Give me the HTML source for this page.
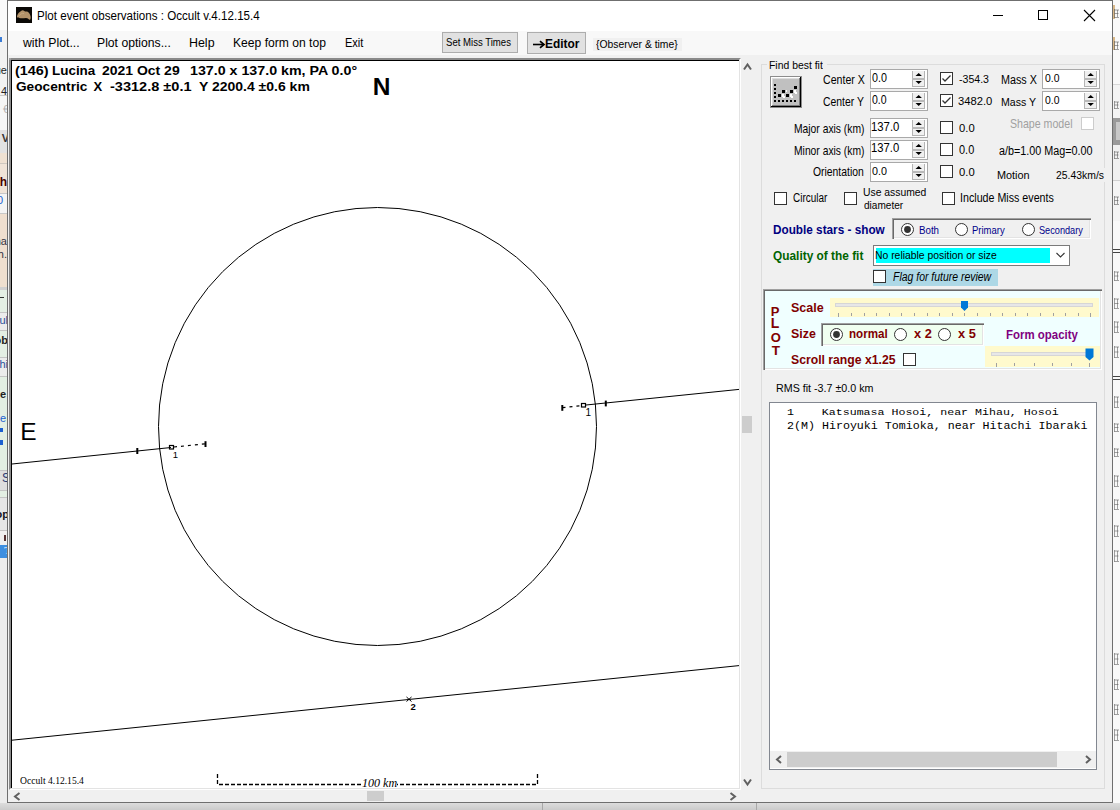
<!DOCTYPE html><html><head><meta charset="utf-8"><style>
html,body{margin:0;padding:0;}
body{width:1120px;height:810px;position:relative;overflow:hidden;background:#f0f0f0;}
body>div,body>svg{position:absolute;}
.t{white-space:pre;transform-origin:0 0;}
</style></head><body>
<div style="left:0px;top:0px;width:1120px;height:810px;background:#f0f0f0;"></div>
<div style="left:0px;top:0px;width:7px;height:30px;background:#fafafa;"></div>
<div style="left:0px;top:30px;width:7px;height:65px;background:#f2f2f2;"></div>
<div style="left:0px;top:95px;width:7px;height:35px;background:#f6f6f6;"></div>
<div style="left:0px;top:130px;width:7px;height:23px;background:#e2e2e2;"></div>
<div style="left:0px;top:153px;width:7px;height:10px;background:#efe1d2;"></div>
<div style="left:0px;top:163px;width:7px;height:1px;background:#cfc8c0;"></div>
<div style="left:0px;top:164px;width:7px;height:29px;background:#f0e4d8;"></div>
<div style="left:0px;top:193px;width:7px;height:20px;background:#f4f4f4;"></div>
<div style="left:0px;top:213px;width:7px;height:74px;background:#efdfcf;"></div>
<div style="left:0px;top:287px;width:7px;height:3px;background:#d0d0d0;"></div>
<div style="left:0px;top:290px;width:7px;height:22px;background:#e4efe4;"></div>
<div style="left:0px;top:312px;width:7px;height:18px;background:#ececec;"></div>
<div style="left:0px;top:330px;width:7px;height:27px;background:#e4efe4;"></div>
<div style="left:0px;top:357px;width:7px;height:19px;background:#ececec;"></div>
<div style="left:0px;top:376px;width:7px;height:94px;background:#e3efe3;"></div>
<div style="left:0px;top:470px;width:7px;height:20px;background:#dedede;"></div>
<div style="left:0px;top:490px;width:7px;height:7px;background:#e3efe3;"></div>
<div style="left:0px;top:497px;width:7px;height:33px;background:#e6e6e6;"></div>
<div style="left:0px;top:530px;width:7px;height:15px;background:#f0f0f0;"></div>
<div style="left:0px;top:545px;width:7px;height:13px;background:#3d8ee0;"></div>
<div style="left:0px;top:558px;width:7px;height:252px;background:#ececec;"></div>
<div style="left:0px;top:37px;width:2px;height:5px;background:#3a7bd5;"></div>
<div style="left:-193px;width:200px;top:65px;text-align:right;white-space:pre;font:normal 400 11px/11px 'Liberation Sans', sans-serif;color:#222;">ue</div>
<div style="left:0px;top:95px;width:7px;height:1px;background:#c8c8c8;"></div>
<div style="left:-193px;width:200px;top:86px;text-align:right;white-space:pre;font:normal 400 11px/11px 'Liberation Sans', sans-serif;color:#222;">4</div>
<div style="left:-191px;width:200px;top:104px;text-align:right;white-space:pre;font:normal 400 11px/11px 'Liberation Sans', sans-serif;color:#b0b0b0;">S €</div>
<div style="left:-191px;width:200px;top:133px;text-align:right;white-space:pre;font:normal 700 11px/11px 'Liberation Sans', sans-serif;color:#333;">V</div>
<div style="left:-193px;width:200px;top:176px;text-align:right;white-space:pre;font:normal 700 12px/12px 'Liberation Sans', sans-serif;color:#400;">h</div>
<div style="left:0px;top:193px;width:7px;height:1px;background:#c8c8c8;"></div>
<div style="left:0px;top:213px;width:7px;height:1px;background:#c8c8c8;"></div>
<div style="left:-197px;width:200px;top:195px;text-align:right;white-space:pre;font:normal 400 11px/11px 'Liberation Sans', sans-serif;color:#1c5fd0;">0</div>
<div style="left:-193px;width:200px;top:236px;text-align:right;white-space:pre;font:normal 400 11px/11px 'Liberation Sans', sans-serif;color:#334;">na</div>
<div style="left:-193px;width:200px;top:249px;text-align:right;white-space:pre;font:normal 400 11px/11px 'Liberation Sans', sans-serif;color:#334;">h.</div>
<div style="left:0px;top:297px;width:4px;height:1px;background:#333;"></div>
<div style="left:-192px;width:200px;top:315px;text-align:right;white-space:pre;font:normal 400 11px/11px 'Liberation Sans', sans-serif;color:#2a4f9a;">ul</div>
<div style="left:-192px;width:200px;top:335px;text-align:right;white-space:pre;font:normal 700 11px/11px 'Liberation Sans', sans-serif;color:#222;">ob</div>
<div style="left:-192px;width:200px;top:359px;text-align:right;white-space:pre;font:normal 400 11px/11px 'Liberation Sans', sans-serif;color:#2a4f9a;">hi</div>
<div style="left:-194px;width:200px;top:389px;text-align:right;white-space:pre;font:normal 700 11px/11px 'Liberation Sans', sans-serif;color:#222;">e</div>
<div style="left:-194px;width:200px;top:413px;text-align:right;white-space:pre;font:normal 400 11px/11px 'Liberation Sans', sans-serif;color:#1c5fd0;">e</div>
<div style="left:0px;top:428px;width:3px;height:4px;background:#1c5fd0;"></div>
<div style="left:-190px;width:200px;top:472px;text-align:right;white-space:pre;font:normal 400 12px/12px 'Liberation Sans', sans-serif;color:#2a3a70;">S</div>
<div style="left:-191px;width:200px;top:509px;text-align:right;white-space:pre;font:normal 700 11px/11px 'Liberation Sans', sans-serif;color:#112;">op</div>
<div style="left:4px;top:535px;width:2px;height:6px;background:#533;"></div>
<div style="left:-189px;width:200px;top:545px;text-align:right;white-space:pre;font:normal 400 11px/11px 'Liberation Serif', serif;color:#fff;">T</div>
<div style="left:0px;top:312px;width:7px;height:1px;background:#c4c4c4;"></div>
<div style="left:0px;top:330px;width:7px;height:1px;background:#c4c4c4;"></div>
<div style="left:0px;top:357px;width:7px;height:1px;background:#c4c4c4;"></div>
<div style="left:0px;top:376px;width:7px;height:1px;background:#c4c4c4;"></div>
<div style="left:0px;top:470px;width:7px;height:1px;background:#c4c4c4;"></div>
<div style="left:0px;top:490px;width:7px;height:1px;background:#c4c4c4;"></div>
<div style="left:0px;top:497px;width:7px;height:1px;background:#c4c4c4;"></div>
<div style="left:0px;top:530px;width:7px;height:1px;background:#c4c4c4;"></div>
<div style="left:0px;top:440px;width:3px;height:5px;background:#1c5fd0;"></div>
<div style="left:1113px;top:0px;width:7px;height:810px;background:#f9f9f9;"></div>
<div style="left:1113px;top:5px;width:2px;height:14px;background:#d9b98a;"></div>
<div style="left:1113px;top:37px;width:2px;height:13px;background:#d9b98a;"></div>
<div style="left:1113px;top:84px;width:7px;height:1px;background:#d8d8d8;"></div>
<div style="left:1113px;top:85px;width:7px;height:33px;background:#f4f4f4;"></div>
<div style="left:1113px;top:118px;width:7px;height:27px;background:#9a9a9a;"></div>
<div style="left:1116px;top:122px;width:4px;height:18px;background:#c8c8c8;"></div>
<div style="left:1113px;top:145px;width:7px;height:35px;background:#f0f0f0;"></div>
<div style="left:1113px;top:180px;width:7px;height:1px;background:#d0d0d0;"></div>
<div style="left:1113px;top:181px;width:7px;height:40px;background:#f4f4f4;"></div>
<div style="left:1113px;top:249px;width:7px;height:1px;background:#444;"></div>
<div style="left:1113px;top:252px;width:7px;height:1px;background:#444;"></div>
<div style="left:1113px;top:376px;width:7px;height:1px;background:#444;"></div>
<div style="left:1113px;top:379px;width:7px;height:1px;background:#444;"></div>
<svg style="left:1113px;top:8px" width="7" height="11"><path d="M1.5 1 V10 M1.5 2 H6 M1.5 5.5 H5.5 M4.5 2 V9 M1.5 9.5 H6" stroke="#555" stroke-width="1" fill="none" opacity="0.55"/></svg>
<svg style="left:1113px;top:40px" width="7" height="11"><path d="M1.5 1 V10 M1.5 2 H6 M1.5 5.5 H5.5 M4.5 2 V9 M1.5 9.5 H6" stroke="#555" stroke-width="1" fill="none" opacity="0.55"/></svg>
<svg style="left:1113px;top:100px" width="7" height="10"><path d="M1.5 1 V9 M1.5 2 H6 M1.5 5.0 H5.5 M4.5 2 V8 M1.5 8.5 H6" stroke="#555" stroke-width="1" fill="none" opacity="0.55"/></svg>
<svg style="left:1113px;top:150px" width="7" height="10"><path d="M1.5 1 V9 M1.5 2 H6 M1.5 5.0 H5.5 M4.5 2 V8 M1.5 8.5 H6" stroke="#555" stroke-width="1" fill="none" opacity="0.55"/></svg>
<svg style="left:1113px;top:195px" width="7" height="11"><path d="M1.5 1 V10 M1.5 2 H6 M1.5 5.5 H5.5 M4.5 2 V9 M1.5 9.5 H6" stroke="#555" stroke-width="1" fill="none" opacity="0.55"/></svg>
<svg style="left:1113px;top:270px" width="7" height="12"><path d="M1.5 1 V11 M1.5 2 H6 M1.5 6.0 H5.5 M4.5 2 V10 M1.5 10.5 H6" stroke="#555" stroke-width="1" fill="none" opacity="0.55"/></svg>
<svg style="left:1113px;top:297px" width="7" height="13"><path d="M1.5 1 V12 M1.5 2 H6 M1.5 6.5 H5.5 M4.5 2 V11 M1.5 11.5 H6" stroke="#555" stroke-width="1" fill="none" opacity="0.55"/></svg>
<svg style="left:1113px;top:320px" width="7" height="14"><path d="M1.5 1 V13 M1.5 2 H6 M1.5 7.0 H5.5 M4.5 2 V12 M1.5 12.5 H6" stroke="#555" stroke-width="1" fill="none" opacity="0.55"/></svg>
<svg style="left:1113px;top:345px" width="7" height="14"><path d="M1.5 1 V13 M1.5 2 H6 M1.5 7.0 H5.5 M4.5 2 V12 M1.5 12.5 H6" stroke="#555" stroke-width="1" fill="none" opacity="0.55"/></svg>
<svg style="left:1113px;top:395px" width="7" height="14"><path d="M1.5 1 V13 M1.5 2 H6 M1.5 7.0 H5.5 M4.5 2 V12 M1.5 12.5 H6" stroke="#555" stroke-width="1" fill="none" opacity="0.55"/></svg>
<svg style="left:1113px;top:422px" width="7" height="11"><path d="M1.5 1 V10 M1.5 2 H6 M1.5 5.5 H5.5 M4.5 2 V9 M1.5 9.5 H6" stroke="#555" stroke-width="1" fill="none" opacity="0.55"/></svg>
<svg style="left:1113px;top:447px" width="7" height="11"><path d="M1.5 1 V10 M1.5 2 H6 M1.5 5.5 H5.5 M4.5 2 V9 M1.5 9.5 H6" stroke="#555" stroke-width="1" fill="none" opacity="0.55"/></svg>
<svg style="left:1113px;top:474px" width="7" height="14"><path d="M1.5 1 V13 M1.5 2 H6 M1.5 7.0 H5.5 M4.5 2 V12 M1.5 12.5 H6" stroke="#555" stroke-width="1" fill="none" opacity="0.55"/></svg>
<svg style="left:1113px;top:498px" width="7" height="13"><path d="M1.5 1 V12 M1.5 2 H6 M1.5 6.5 H5.5 M4.5 2 V11 M1.5 11.5 H6" stroke="#555" stroke-width="1" fill="none" opacity="0.55"/></svg>
<svg style="left:1113px;top:524px" width="7" height="14"><path d="M1.5 1 V13 M1.5 2 H6 M1.5 7.0 H5.5 M4.5 2 V12 M1.5 12.5 H6" stroke="#555" stroke-width="1" fill="none" opacity="0.55"/></svg>
<svg style="left:1113px;top:549px" width="7" height="14"><path d="M1.5 1 V13 M1.5 2 H6 M1.5 7.0 H5.5 M4.5 2 V12 M1.5 12.5 H6" stroke="#555" stroke-width="1" fill="none" opacity="0.55"/></svg>
<svg style="left:1113px;top:652px" width="7" height="14"><path d="M1.5 1 V13 M1.5 2 H6 M1.5 7.0 H5.5 M4.5 2 V12 M1.5 12.5 H6" stroke="#555" stroke-width="1" fill="none" opacity="0.55"/></svg>
<svg style="left:1113px;top:678px" width="7" height="13"><path d="M1.5 1 V12 M1.5 2 H6 M1.5 6.5 H5.5 M4.5 2 V11 M1.5 11.5 H6" stroke="#555" stroke-width="1" fill="none" opacity="0.55"/></svg>
<svg style="left:1113px;top:703px" width="7" height="13"><path d="M1.5 1 V12 M1.5 2 H6 M1.5 6.5 H5.5 M4.5 2 V11 M1.5 11.5 H6" stroke="#555" stroke-width="1" fill="none" opacity="0.55"/></svg>
<svg style="left:1113px;top:728px" width="7" height="14"><path d="M1.5 1 V13 M1.5 2 H6 M1.5 7.0 H5.5 M4.5 2 V12 M1.5 12.5 H6" stroke="#555" stroke-width="1" fill="none" opacity="0.55"/></svg>
<div style="left:0px;top:803px;width:1120px;height:7px;background:linear-gradient(#dcdcdc,#cbcbcb);"></div>
<div style="left:542px;top:803px;width:1px;height:7px;background:#a8a8a8;"></div>
<div style="left:756px;top:803px;width:1px;height:7px;background:#a8a8a8;"></div>
<div style="left:7px;top:0px;width:1106px;height:803px;background:#f0f0f0;box-sizing:border-box;border:1px solid #6f6f6f;"></div>
<div style="left:8px;top:1px;width:1104px;height:30px;background:#ffffff;"></div>
<svg style="left:16px;top:7px" width="16" height="16"><rect width="16" height="16" fill="#0b0906"/><path d="M1 10 C1 7 3.5 4.5 6.5 3.2 C8 3.5 9 4.8 10 4.6 C12 4.2 13.5 6 14.5 9 C15 11 14.5 13 13.5 12.8 C12.5 12 11.5 11 10 11 C8 11 6 11.5 4.5 11.2 C3 11 1.5 11 1 10 Z" fill="#b3936a"/><path d="M3 9 C4 7 6 6 8 6.5" stroke="#d2b58c" stroke-width="1" fill="none" opacity="0.6"/></svg>
<div id="title" class="t" style="left:36.82px;top:9.50px;font:normal 400 12.5px/12.5px 'Liberation Sans', sans-serif;color:#000;transform:scaleX(0.9272);">Plot event observations : Occult v.4.12.15.4</div>
<div style="left:993px;top:15px;width:10px;height:1px;background:#000;"></div>
<div style="left:1038px;top:10px;width:10px;height:10px;box-sizing:border-box;border:1px solid #000;"></div>
<svg style="left:1083px;top:9px" width="13" height="13"><path d="M1 1 L12 12 M12 1 L1 12" stroke="#000" stroke-width="1.1"/></svg>
<div style="left:8px;top:31px;width:1104px;height:24px;background:#f8f8f8;"></div>
<div id="m1" class="t" style="left:23.22px;top:35.75px;font:normal 400 13.0px/13.0px 'Liberation Sans', sans-serif;color:#000;transform:scaleX(0.9441);">with Plot...</div>
<div id="m2" class="t" style="left:97.32px;top:35.75px;font:normal 400 13.0px/13.0px 'Liberation Sans', sans-serif;color:#000;transform:scaleX(0.9378);">Plot options...</div>
<div id="m3" class="t" style="left:189.32px;top:35.75px;font:normal 400 13.0px/13.0px 'Liberation Sans', sans-serif;color:#000;transform:scaleX(0.9552);">Help</div>
<div id="m4" class="t" style="left:233.04px;top:35.75px;font:normal 400 13.0px/13.0px 'Liberation Sans', sans-serif;color:#000;transform:scaleX(0.9314);">Keep form on top</div>
<div id="m5" class="t" style="left:344.60px;top:35.75px;font:normal 400 13.0px/13.0px 'Liberation Sans', sans-serif;color:#000;transform:scaleX(0.8477);">Exit</div>
<div style="left:442px;top:32px;width:76px;height:21px;background:#e1e1e1;box-sizing:border-box;border:1px solid #adadad;"></div>
<div id="b1" class="t" style="left:446.10px;top:37.90px;font:normal 400 10.0px/10.0px 'Liberation Sans', sans-serif;color:#000;transform:scaleX(0.9576);">Set Miss Times</div>
<div style="left:527px;top:32px;width:59px;height:22px;background:#e1e1e1;box-sizing:border-box;border:1px solid #adadad;"></div>
<div id="b2" class="t" style="left:545.10px;top:36.70px;font:normal 700 13.0px/13.0px 'Liberation Sans', sans-serif;color:#000;transform:scaleX(0.9156);">Editor</div>
<svg style="left:532px;top:39px" width="14" height="11"><path d="M1 5.5 H11.5" stroke="#000" stroke-width="1.6"/><path d="M8 2.2 L12 5.5 L8 8.8" fill="none" stroke="#000" stroke-width="1.7"/></svg>
<div style="left:593px;top:38px;width:89px;height:13px;background:#f0f0f0;"></div>
<div id="b3" class="t" style="left:596.22px;top:39.00px;font:normal 400 11.5px/11.5px 'Liberation Sans', sans-serif;color:#000;transform:scaleX(0.9001);">{Observer &amp; time}</div>
<div style="left:8px;top:55px;width:734px;height:4px;background:#f0f0f0;"></div>
<div style="left:9px;top:58px;width:732px;height:732px;background:#fff;box-sizing:border-box;border-top:2px solid #8a8a8a;border-left:2px solid #8a8a8a;border-right:2px solid #fff;border-bottom:2px solid #fff;"></div>
<div style="left:9px;top:58px;width:2px;height:2px;background:#a0a0a0;"></div>
<div style="left:11px;top:60px;width:728px;height:1px;background:#000;"></div>
<div style="left:11px;top:60px;width:1px;height:728px;background:#000;"></div>
<div style="left:739px;top:60px;width:1px;height:729px;background:#e3e3e3;"></div>
<div style="left:11px;top:788px;width:729px;height:1px;background:#e3e3e3;"></div>
<svg style="left:0;top:0" width="1120" height="810">
<g fill="none" stroke="#000">
<circle cx="377.5" cy="426.5" r="219" stroke-width="1.0"/>
<line x1="12" y1="464" x2="171" y2="447.5" stroke-width="1.0"/>
<line x1="12" y1="740.2" x2="739" y2="665.6" stroke-width="1.0"/>
<line x1="586" y1="405" x2="739" y2="389.4" stroke-width="1.0"/>
<line x1="174" y1="447" x2="205" y2="443.8" stroke-width="1.2" stroke-dasharray="3 4"/>
<line x1="562.5" y1="407.6" x2="581" y2="405.7" stroke-width="1.2" stroke-dasharray="3 4"/>
<rect x="169.5" y="445.5" width="4" height="3.5" stroke-width="1.2"/>
<rect x="581.5" y="403.5" width="4" height="3.5" stroke-width="1.2"/>
<line x1="137.3" y1="448" x2="137.3" y2="454" stroke-width="2"/>
<line x1="205.5" y1="441.2" x2="205.5" y2="447" stroke-width="2"/>
<line x1="605.8" y1="400.6" x2="605.8" y2="406.4" stroke-width="2"/>
<line x1="562.3" y1="405" x2="562.3" y2="410.8" stroke-width="2"/>
<path d="M406.5 697 L411.5 701.5 M411.5 697 L406.5 701.5" stroke-width="1"/>
<path d="M217.5 774 V784.5 H377.5 M537.5 774 V784.5 H377.5" stroke-width="1.3" stroke-dasharray="4 2"/>
</g></svg>
<div id="h1a" class="t" style="left:14.73px;top:65.30px;font:normal 700 12.5px/12.5px 'Liberation Sans', sans-serif;color:#000;transform:scaleX(1.1536);">(146)</div>
<div id="h1b" class="t" style="left:51.73px;top:65.30px;font:normal 700 12.5px/12.5px 'Liberation Sans', sans-serif;color:#000;transform:scaleX(1.0745);">Lucina</div>
<div id="h1c" class="t" style="left:102.37px;top:65.30px;font:normal 700 12.5px/12.5px 'Liberation Sans', sans-serif;color:#000;transform:scaleX(1.1175);">2021 Oct 29</div>
<div id="h1d" class="t" style="left:189.52px;top:65.30px;font:normal 700 12.5px/12.5px 'Liberation Sans', sans-serif;color:#000;transform:scaleX(1.1384);">137.0 x 137.0 km, PA 0.0°</div>
<div id="h2a" class="t" style="left:15.58px;top:80.00px;font:normal 700 13.0px/13.0px 'Liberation Sans', sans-serif;color:#000;transform:scaleX(1.0507);">Geocentric</div>
<div id="h2b" class="t" style="left:93.47px;top:80.00px;font:normal 700 13.0px/13.0px 'Liberation Sans', sans-serif;color:#000;">X</div>
<div id="h2c" class="t" style="left:110.19px;top:80.00px;font:normal 700 13.0px/13.0px 'Liberation Sans', sans-serif;color:#000;transform:scaleX(1.1181);">-3312.8 ±0.1</div>
<div id="h2d" class="t" style="left:199.05px;top:80.00px;font:normal 700 13.0px/13.0px 'Liberation Sans', sans-serif;color:#000;transform:scaleX(1.0755);">Y 2200.4 ±0.6 km</div>
<div id="N" class="t" style="left:372.64px;top:75.30px;font:normal 700 24.5px/24.5px 'Liberation Sans', sans-serif;color:#000;">N</div>
<div id="E" class="t" style="left:20.20px;top:420.30px;font:normal 400 24.5px/24.5px 'Liberation Sans', sans-serif;color:#000;">E</div>
<div id="l1a" class="t" style="left:172.66px;top:450.20px;font:normal 400 9.5px/9.5px 'Liberation Sans', sans-serif;color:#000;">1</div>
<div id="l1b" class="t" style="left:585.38px;top:407.75px;font:normal 400 10.0px/10.0px 'Liberation Sans', sans-serif;color:#000;">1</div>
<div id="l2" class="t" style="left:410.44px;top:702.30px;font:normal 700 9.5px/9.5px 'Liberation Sans', sans-serif;color:#000;">2</div>
<div style="left:361px;top:777px;width:36px;height:11px;background:#fff;"></div>
<div id="occ" class="t" style="left:19.56px;top:775.80px;font:normal 400 10.0px/10.0px 'Liberation Serif', serif;color:#000;transform:scaleX(0.9585);">Occult 4.12.15.4</div>
<div id="km" class="t" style="left:362.10px;top:778.30px;font:italic 400 11.5px/11.5px 'Liberation Serif', serif;color:#000;transform:scaleX(1.0472);">100 km</div>
<div style="left:367px;top:791px;width:17px;height:10px;background:#cdcdcd;"></div>
<div style="left:742px;top:416px;width:10px;height:17px;background:#cdcdcd;"></div>
<svg style="left:0;top:0" width="1120" height="810"><g fill="none" stroke="#606060" stroke-width="2">
<path d="M19.5 793 L15 796.5 L19.5 800"/>
<path d="M730.5 793 L735 796.5 L730.5 800"/>
<path d="M744 69.5 L747.5 64.5 L751 69.5"/>
<path d="M744 779.5 L747.5 784.5 L751 779.5"/>
</g></svg>
<div style="left:761px;top:64px;width:344px;height:725px;box-sizing:border-box;border:1px solid #dcdcdc;"></div>
<div style="left:767px;top:58px;width:60px;height:10px;background:#f0f0f0;"></div>
<div id="fbf" class="t" style="left:769.04px;top:59.70px;font:normal 400 11.0px/11.0px 'Liberation Sans', sans-serif;color:#000;transform:scaleX(0.9464);">Find best fit</div>
<svg style="left:770px;top:76px" width="32" height="32" shape-rendering="crispEdges">
<rect x="0" y="0" width="32" height="32" fill="#8c8c8c"/>
<rect x="1" y="1" width="30" height="30" fill="#000"/>
<rect x="1" y="1" width="29" height="29" fill="#fff"/>
<rect x="2" y="2" width="28" height="28" fill="#7a7a7a"/>
<rect x="2" y="2" width="27" height="27" fill="#dcdcdc"/>
<rect x="3" y="3" width="26" height="26" fill="#c0c0c0"/>
<g fill="#000">
<rect x="4" y="8" width="2" height="2"/><rect x="4" y="12" width="2" height="2"/><rect x="4" y="16" width="2" height="2"/><rect x="4" y="20" width="2" height="2"/><rect x="4" y="24" width="2" height="2"/>
<rect x="8" y="24" width="2" height="2"/><rect x="12" y="24" width="2" height="2"/><rect x="16" y="24" width="2" height="2"/><rect x="20" y="24" width="2" height="2"/><rect x="24" y="24" width="2" height="2"/>
<rect x="8" y="18" width="3" height="3"/><rect x="12" y="14" width="3" height="3"/><rect x="16" y="18" width="3" height="3"/><rect x="20" y="14" width="3" height="3"/><rect x="24" y="10" width="3" height="3"/>
</g>
<g fill="#fff"><rect x="12" y="18" width="2" height="3"/><rect x="13" y="20" width="2" height="2"/><rect x="20" y="18" width="2" height="3"/><rect x="21" y="20" width="2" height="2"/><rect x="24" y="14" width="2" height="3"/><rect x="25" y="16" width="2" height="2"/><rect x="16" y="14" width="1" height="2"/></g>
</svg>
<div id="cx" class="t" style="left:822.50px;top:73.90px;font:normal 400 12.0px/12.0px 'Liberation Sans', sans-serif;color:#000;transform:scaleX(0.8833);">Center X</div>
<div id="cy" class="t" style="left:822.50px;top:96.10px;font:normal 400 12.5px/12.5px 'Liberation Sans', sans-serif;color:#000;transform:scaleX(0.8335);">Center Y</div>
<div style="left:870px;top:69px;width:56px;height:18px;background:#fff;border:1px solid #a9a9a9;"></div>
<div style="left:912px;top:71px;width:13px;height:16px;background:#f0f0f0;border-left:1px solid #b4b4b4;border-right:1px solid #b4b4b4;border-bottom:1px solid #b4b4b4;box-sizing:border-box;"></div>
<div style="left:912px;top:78px;width:13px;height:2px;background:#b9b9b9;"></div>
<svg style="left:912px;top:69px" width="14" height="20"><path d="M3.5 7 L6.7 4 L9.9 7 Z" fill="#000"/><path d="M3.5 12 L6.7 15 L9.9 12 Z" fill="#000"/></svg>
<div style="left:870px;top:91px;width:56px;height:18px;background:#fff;border:1px solid #a9a9a9;"></div>
<div style="left:912px;top:93px;width:13px;height:16px;background:#f0f0f0;border-left:1px solid #b4b4b4;border-right:1px solid #b4b4b4;border-bottom:1px solid #b4b4b4;box-sizing:border-box;"></div>
<div style="left:912px;top:100px;width:13px;height:2px;background:#b9b9b9;"></div>
<svg style="left:912px;top:91px" width="14" height="20"><path d="M3.5 7 L6.7 4 L9.9 7 Z" fill="#000"/><path d="M3.5 12 L6.7 15 L9.9 12 Z" fill="#000"/></svg>
<div id="n1" class="t" style="left:872.22px;top:71.10px;font:normal 400 13.0px/13.0px 'Liberation Sans', sans-serif;color:#000;transform:scaleX(0.8245);">0.0</div>
<div id="n2" class="t" style="left:872.22px;top:92.50px;font:normal 400 13.5px/13.5px 'Liberation Sans', sans-serif;color:#000;transform:scaleX(0.7787);">0.0</div>
<div style="left:940px;top:72px;width:11px;height:11px;background:#fff;border:1px solid #333;"></div>
<svg style="left:940px;top:72px" width="13" height="13"><path d="M2.5 6.5 L5 9 L10.5 3.5" fill="none" stroke="#333" stroke-width="1.3"/></svg>
<div style="left:940px;top:94px;width:11px;height:11px;background:#fff;border:1px solid #333;"></div>
<svg style="left:940px;top:94px" width="13" height="13"><path d="M2.5 6.5 L5 9 L10.5 3.5" fill="none" stroke="#333" stroke-width="1.3"/></svg>
<div id="v1" class="t" style="left:959.00px;top:73.80px;font:normal 400 11.5px/11.5px 'Liberation Sans', sans-serif;color:#000;transform:scaleX(0.9188);">-354.3</div>
<div id="v2" class="t" style="left:958.04px;top:95.50px;font:normal 400 11.5px/11.5px 'Liberation Sans', sans-serif;color:#000;transform:scaleX(0.9768);">3482.0</div>
<div id="mx" class="t" style="left:1000.60px;top:74.10px;font:normal 400 12.0px/12.0px 'Liberation Sans', sans-serif;color:#000;transform:scaleX(0.8976);">Mass X</div>
<div id="my" class="t" style="left:1000.60px;top:97.30px;font:normal 400 11.5px/11.5px 'Liberation Sans', sans-serif;color:#000;transform:scaleX(0.9191);">Mass Y</div>
<div style="left:1042px;top:69px;width:56px;height:18px;background:#fff;border:1px solid #a9a9a9;"></div>
<div style="left:1084px;top:71px;width:13px;height:16px;background:#f0f0f0;border-left:1px solid #b4b4b4;border-right:1px solid #b4b4b4;border-bottom:1px solid #b4b4b4;box-sizing:border-box;"></div>
<div style="left:1084px;top:78px;width:13px;height:2px;background:#b9b9b9;"></div>
<svg style="left:1084px;top:69px" width="14" height="20"><path d="M3.5 7 L6.7 4 L9.9 7 Z" fill="#000"/><path d="M3.5 12 L6.7 15 L9.9 12 Z" fill="#000"/></svg>
<div style="left:1042px;top:91px;width:56px;height:18px;background:#fff;border:1px solid #a9a9a9;"></div>
<div style="left:1084px;top:93px;width:13px;height:16px;background:#f0f0f0;border-left:1px solid #b4b4b4;border-right:1px solid #b4b4b4;border-bottom:1px solid #b4b4b4;box-sizing:border-box;"></div>
<div style="left:1084px;top:100px;width:13px;height:2px;background:#b9b9b9;"></div>
<svg style="left:1084px;top:91px" width="14" height="20"><path d="M3.5 7 L6.7 4 L9.9 7 Z" fill="#000"/><path d="M3.5 12 L6.7 15 L9.9 12 Z" fill="#000"/></svg>
<div id="n3" class="t" style="left:1044.50px;top:72.70px;font:normal 400 11.0px/11.0px 'Liberation Sans', sans-serif;color:#000;transform:scaleX(0.9467);">0.0</div>
<div id="n4" class="t" style="left:1044.50px;top:94.70px;font:normal 400 11.0px/11.0px 'Liberation Sans', sans-serif;color:#000;transform:scaleX(0.9467);">0.0</div>
<div id="maj" class="t" style="left:793.60px;top:121.90px;font:normal 400 13.0px/13.0px 'Liberation Sans', sans-serif;color:#000;transform:scaleX(0.7932);">Major axis (km)</div>
<div id="min" class="t" style="left:793.60px;top:143.60px;font:normal 400 13.0px/13.0px 'Liberation Sans', sans-serif;color:#000;transform:scaleX(0.7932);">Minor axis (km)</div>
<div id="ori" class="t" style="left:813.00px;top:165.50px;font:normal 400 12.5px/12.5px 'Liberation Sans', sans-serif;color:#000;transform:scaleX(0.8297);">Orientation</div>
<div style="left:870px;top:118px;width:56px;height:18px;background:#fff;border:1px solid #a9a9a9;"></div>
<div style="left:912px;top:120px;width:13px;height:16px;background:#f0f0f0;border-left:1px solid #b4b4b4;border-right:1px solid #b4b4b4;border-bottom:1px solid #b4b4b4;box-sizing:border-box;"></div>
<div style="left:912px;top:127px;width:13px;height:2px;background:#b9b9b9;"></div>
<svg style="left:912px;top:118px" width="14" height="20"><path d="M3.5 7 L6.7 4 L9.9 7 Z" fill="#000"/><path d="M3.5 12 L6.7 15 L9.9 12 Z" fill="#000"/></svg>
<div style="left:870px;top:140px;width:56px;height:18px;background:#fff;border:1px solid #a9a9a9;"></div>
<div style="left:912px;top:142px;width:13px;height:16px;background:#f0f0f0;border-left:1px solid #b4b4b4;border-right:1px solid #b4b4b4;border-bottom:1px solid #b4b4b4;box-sizing:border-box;"></div>
<div style="left:912px;top:149px;width:13px;height:2px;background:#b9b9b9;"></div>
<svg style="left:912px;top:140px" width="14" height="20"><path d="M3.5 7 L6.7 4 L9.9 7 Z" fill="#000"/><path d="M3.5 12 L6.7 15 L9.9 12 Z" fill="#000"/></svg>
<div style="left:870px;top:162px;width:56px;height:18px;background:#fff;border:1px solid #a9a9a9;"></div>
<div style="left:912px;top:164px;width:13px;height:16px;background:#f0f0f0;border-left:1px solid #b4b4b4;border-right:1px solid #b4b4b4;border-bottom:1px solid #b4b4b4;box-sizing:border-box;"></div>
<div style="left:912px;top:171px;width:13px;height:2px;background:#b9b9b9;"></div>
<svg style="left:912px;top:162px" width="14" height="20"><path d="M3.5 7 L6.7 4 L9.9 7 Z" fill="#000"/><path d="M3.5 12 L6.7 15 L9.9 12 Z" fill="#000"/></svg>
<div id="n5" class="t" style="left:871.32px;top:120.50px;font:normal 400 12.5px/12.5px 'Liberation Sans', sans-serif;color:#000;transform:scaleX(0.9072);">137.0</div>
<div id="n6" class="t" style="left:871.32px;top:141.50px;font:normal 400 12.0px/12.0px 'Liberation Sans', sans-serif;color:#000;transform:scaleX(0.9384);">137.0</div>
<div id="n7" class="t" style="left:872.22px;top:166.20px;font:normal 400 11.5px/11.5px 'Liberation Sans', sans-serif;color:#000;transform:scaleX(0.9345);">0.0</div>
<div style="left:940px;top:121px;width:11px;height:11px;background:#fff;border:1px solid #333;"></div>
<div style="left:940px;top:143px;width:11px;height:11px;background:#fff;border:1px solid #333;"></div>
<div style="left:940px;top:165px;width:11px;height:11px;background:#fff;border:1px solid #333;"></div>
<div id="z1" class="t" style="left:959.28px;top:123.10px;font:normal 400 11.5px/11.5px 'Liberation Sans', sans-serif;color:#000;transform:scaleX(0.9779);">0.0</div>
<div id="z2" class="t" style="left:959.28px;top:143.60px;font:normal 400 12.0px/12.0px 'Liberation Sans', sans-serif;color:#000;transform:scaleX(0.9127);">0.0</div>
<div id="z3" class="t" style="left:959.28px;top:167.00px;font:normal 400 11.5px/11.5px 'Liberation Sans', sans-serif;color:#000;transform:scaleX(0.9779);">0.0</div>
<div id="shp" class="t" style="left:1010.32px;top:117.00px;font:normal 400 13.0px/13.0px 'Liberation Sans', sans-serif;color:#a0a0a0;transform:scaleX(0.8160);">Shape model</div>
<div style="left:1081px;top:117px;width:11px;height:11px;background:#fff;border:1px solid #cccccc;"></div>
<div id="ab" class="t" style="left:999.00px;top:144.60px;font:normal 400 12.5px/12.5px 'Liberation Sans', sans-serif;color:#000;transform:scaleX(0.8630);">a/b=1.00 Mag=0.00</div>
<div id="mot" class="t" style="left:997.16px;top:170.20px;font:normal 400 10.5px/10.5px 'Liberation Sans', sans-serif;color:#000;transform:scaleX(1.0348);">Motion</div>
<div style="left:1054px;top:168px;width:51px;height:14px;background:#f0f0f0;"></div>
<div id="kms" class="t" style="left:1056.22px;top:170.70px;font:normal 400 10.0px/10.0px 'Liberation Sans', sans-serif;color:#000;transform:scaleX(1.0401);">25.43km/s</div>
<div style="left:774px;top:192px;width:11px;height:11px;background:#fff;border:1px solid #333;"></div>
<div id="circ" class="t" style="left:793.00px;top:191.50px;font:normal 400 12.0px/12.0px 'Liberation Sans', sans-serif;color:#000;transform:scaleX(0.8295);">Circular</div>
<div style="left:844px;top:192px;width:11px;height:11px;background:#fff;border:1px solid #333;"></div>
<div id="use1" class="t" style="left:863.16px;top:186.60px;font:normal 400 10.5px/10.5px 'Liberation Sans', sans-serif;color:#000;transform:scaleX(0.9874);">Use assumed</div>
<div id="use2" class="t" style="left:864.06px;top:200.60px;font:normal 400 10.0px/10.0px 'Liberation Sans', sans-serif;color:#000;transform:scaleX(1.0057);">diameter</div>
<div style="left:942px;top:192px;width:11px;height:11px;background:#fff;border:1px solid #333;"></div>
<div id="inc" class="t" style="left:960.04px;top:191.50px;font:normal 400 12.0px/12.0px 'Liberation Sans', sans-serif;color:#000;transform:scaleX(0.8904);">Include Miss events</div>
<div id="dbl" class="t" style="left:773.38px;top:224.40px;font:normal 700 12.5px/12.5px 'Liberation Sans', sans-serif;color:#000080;transform:scaleX(0.9407);">Double stars - show</div>
<div style="left:892px;top:218px;width:199px;height:21px;background:#f0f0f0;box-shadow: inset 1px 1px 0 #a0a0a0, inset 2px 2px 0 #696969, inset -1px -1px 0 #fff, inset -2px -2px 0 #e3e3e3;"></div>
<svg style="left:901px;top:223px" width="13" height="13"><circle cx="6.5" cy="6.5" r="6" fill="#fff" stroke="#333" stroke-width="1"/><circle cx="6.5" cy="6.5" r="3.4" fill="#333"/></svg>
<div id="both" class="t" style="left:918.88px;top:225.90px;font:normal 400 10.0px/10.0px 'Liberation Sans', sans-serif;color:#00008b;transform:scaleX(0.9742);">Both</div>
<svg style="left:955px;top:223px" width="13" height="13"><circle cx="6.5" cy="6.5" r="6" fill="#fff" stroke="#333" stroke-width="1"/></svg>
<div id="prim" class="t" style="left:972.10px;top:225.40px;font:normal 400 10.5px/10.5px 'Liberation Sans', sans-serif;color:#00008b;transform:scaleX(0.9029);">Primary</div>
<svg style="left:1022px;top:223px" width="13" height="13"><circle cx="6.5" cy="6.5" r="6" fill="#fff" stroke="#333" stroke-width="1"/></svg>
<div id="sec" class="t" style="left:1039.38px;top:225.40px;font:normal 400 10.5px/10.5px 'Liberation Sans', sans-serif;color:#00008b;transform:scaleX(0.8736);">Secondary</div>
<div id="qual" class="t" style="left:772.50px;top:249.50px;font:normal 700 12.5px/12.5px 'Liberation Sans', sans-serif;color:#006400;transform:scaleX(0.9495);">Quality of the fit</div>
<div style="left:873px;top:245px;width:197px;height:21px;background:#fff;box-sizing:border-box;border:1px solid #7a7a7a;"></div>
<div style="left:876px;top:248px;width:174px;height:15px;background:#00ffff;"></div>
<div id="combo" class="t" style="left:875.32px;top:249.60px;font:normal 400 11.0px/11.0px 'Liberation Sans', sans-serif;color:#000;transform:scaleX(0.9437);">No reliable position or size</div>
<svg style="left:1055px;top:250px" width="12" height="10"><path d="M1.5 3 L5.5 7 L9.5 3" fill="none" stroke="#333" stroke-width="1.1"/></svg>
<div style="left:873px;top:269px;width:125px;height:17px;background:#add8e6;"></div>
<div style="left:873px;top:270px;width:11px;height:11px;background:#fff;border:1px solid #333;"></div>
<div id="flag" class="t" style="left:892.78px;top:270.60px;font:italic 400 12.0px/12.0px 'Liberation Sans', sans-serif;color:#000;transform:scaleX(0.8709);">Flag for future review</div>
<div style="left:763px;top:289px;width:339px;height:81px;background:#f0ffff;box-shadow: inset 1px 1px 0 #a0a0a0, inset 2px 2px 0 #696969, inset -1px -1px 0 #fff, inset -2px -2px 0 #e3e3e3;"></div>
<div id="pP" class="t" style="left:770.79px;top:304.50px;font:normal 700 13.0px/13.0px 'Liberation Sans', sans-serif;color:#800000;">P</div>
<div id="pL" class="t" style="left:770.79px;top:316.40px;font:normal 700 14.0px/14.0px 'Liberation Sans', sans-serif;color:#800000;">L</div>
<div id="pO" class="t" style="left:770.79px;top:331.00px;font:normal 700 13.0px/13.0px 'Liberation Sans', sans-serif;color:#800000;">O</div>
<div id="pT" class="t" style="left:771.71px;top:344.40px;font:normal 700 13.5px/13.5px 'Liberation Sans', sans-serif;color:#800000;">T</div>
<div id="scl" class="t" style="left:790.54px;top:301.00px;font:normal 700 13.0px/13.0px 'Liberation Sans', sans-serif;color:#800000;transform:scaleX(0.9645);">Scale</div>
<div style="left:830px;top:298px;width:269px;height:19px;background:#fffacd;"></div>
<div style="left:835px;top:303px;width:258px;height:4px;background:#e7e7e7;box-sizing:border-box;border:1px solid #d6d6d6;"></div>
<svg style="left:830px;top:298px" width="269" height="19"><rect x="8" y="15" width="1" height="4" fill="#a0a0a0"/><rect x="21" y="15" width="1" height="3" fill="#a0a0a0"/><rect x="34" y="15" width="1" height="3" fill="#a0a0a0"/><rect x="46" y="15" width="1" height="3" fill="#a0a0a0"/><rect x="59" y="15" width="1" height="3" fill="#a0a0a0"/><rect x="71" y="15" width="1" height="3" fill="#a0a0a0"/><rect x="84" y="15" width="1" height="3" fill="#a0a0a0"/><rect x="97" y="15" width="1" height="3" fill="#a0a0a0"/><rect x="109" y="15" width="1" height="3" fill="#a0a0a0"/><rect x="122" y="15" width="1" height="3" fill="#a0a0a0"/><rect x="134" y="15" width="1" height="3" fill="#a0a0a0"/><rect x="147" y="15" width="1" height="3" fill="#a0a0a0"/><rect x="160" y="15" width="1" height="3" fill="#a0a0a0"/><rect x="172" y="15" width="1" height="3" fill="#a0a0a0"/><rect x="185" y="15" width="1" height="3" fill="#a0a0a0"/><rect x="197" y="15" width="1" height="3" fill="#a0a0a0"/><rect x="210" y="15" width="1" height="3" fill="#a0a0a0"/><rect x="223" y="15" width="1" height="3" fill="#a0a0a0"/><rect x="235" y="15" width="1" height="3" fill="#a0a0a0"/><rect x="248" y="15" width="1" height="3" fill="#a0a0a0"/><rect x="260" y="15" width="1" height="4" fill="#a0a0a0"/></svg>
<svg style="left:960px;top:300px" width="9" height="12"><path d="M1 1 H8 V7.5 L4.5 11 L1 7.5 Z" fill="#0078d7"/></svg>
<div id="size" class="t" style="left:790.54px;top:328.00px;font:normal 700 12.0px/12.0px 'Liberation Sans', sans-serif;color:#800000;transform:scaleX(1.0314);">Size</div>
<div style="left:821px;top:323px;width:163px;height:23px;background:#f0fff0;box-shadow: inset 1px 1px 0 #a0a0a0, inset 2px 2px 0 #696969, inset -1px -1px 0 #fff, inset -2px -2px 0 #e3e3e3;"></div>
<svg style="left:830px;top:328px" width="13" height="13"><circle cx="6.5" cy="6.5" r="6" fill="#fff" stroke="#333" stroke-width="1"/><circle cx="6.5" cy="6.5" r="3.4" fill="#333"/></svg>
<div id="nrm" class="t" style="left:849.16px;top:327.90px;font:normal 700 12.5px/12.5px 'Liberation Sans', sans-serif;color:#800000;transform:scaleX(0.9284);">normal</div>
<svg style="left:894px;top:328px" width="13" height="13"><circle cx="6.5" cy="6.5" r="6" fill="#fff" stroke="#333" stroke-width="1"/></svg>
<div id="x2" class="t" style="left:913.50px;top:327.90px;font:normal 700 12.5px/12.5px 'Liberation Sans', sans-serif;color:#800000;transform:scaleX(1.0238);">x 2</div>
<svg style="left:938px;top:328px" width="13" height="13"><circle cx="6.5" cy="6.5" r="6" fill="#fff" stroke="#333" stroke-width="1"/></svg>
<div id="x5" class="t" style="left:957.78px;top:327.90px;font:normal 700 12.5px/12.5px 'Liberation Sans', sans-serif;color:#800000;transform:scaleX(1.0238);">x 5</div>
<div id="opac" class="t" style="left:1005.54px;top:329.30px;font:normal 700 12.5px/12.5px 'Liberation Sans', sans-serif;color:#800080;transform:scaleX(0.9155);">Form opacity</div>
<div style="left:985px;top:346px;width:115px;height:21px;background:#fffacd;"></div>
<div style="left:991px;top:352px;width:102px;height:4px;background:#e7e7e7;box-sizing:border-box;border:1px solid #d6d6d6;"></div>
<svg style="left:985px;top:346px" width="115" height="21"><rect x="11" y="17" width="1" height="4" fill="#a0a0a0"/><rect x="29" y="17" width="1" height="3" fill="#a0a0a0"/><rect x="49" y="17" width="1" height="3" fill="#a0a0a0"/><rect x="67" y="17" width="1" height="3" fill="#a0a0a0"/><rect x="86" y="17" width="1" height="3" fill="#a0a0a0"/><rect x="104" y="17" width="1" height="4" fill="#a0a0a0"/></svg>
<svg style="left:1085px;top:348px" width="9" height="13"><path d="M0.5 0.5 H8.5 V9 L4.5 12.5 L0.5 9 Z" fill="#0078d7"/></svg>
<div id="scr" class="t" style="left:791.38px;top:353.75px;font:normal 700 12.0px/12.0px 'Liberation Sans', sans-serif;color:#800000;transform:scaleX(1.0177);">Scroll range x1.25</div>
<div style="left:903px;top:353px;width:11px;height:11px;background:#fff;border:1px solid #333;"></div>
<div id="rms" class="t" style="left:776.32px;top:383.00px;font:normal 400 11.5px/11.5px 'Liberation Sans', sans-serif;color:#000;transform:scaleX(0.9301);">RMS fit -3.7 ±0.0 km</div>
<div style="left:769px;top:402px;width:328px;height:368px;background:#fff;box-sizing:border-box;border:1px solid #828790;"></div>
<div id="lb1" class="t" style="left:787.38px;top:407.50px;font:normal 400 9.5px/9.5px 'Liberation Mono', monospace;color:#000;transform:scaleX(1.2217);">1    Katsumasa Hosoi, near Mihau, Hosoi</div>
<div id="lb2" class="t" style="left:787.38px;top:422.10px;font:normal 400 10.0px/10.0px 'Liberation Mono', monospace;color:#000;transform:scaleX(1.1642);">2(M) Hiroyuki Tomioka, near Hitachi Ibaraki</div>
<div style="left:770px;top:751px;width:326px;height:17px;background:#f0f0f0;"></div>
<div style="left:787px;top:752px;width:270px;height:15px;background:#cdcdcd;"></div>
<svg style="left:0;top:0" width="1120" height="810"><g fill="none" stroke="#606060" stroke-width="2">
<path d="M781 756 L777 759.5 L781 763"/>
<path d="M1086 756 L1090 759.5 L1086 763"/>
</g></svg>
</body></html>
